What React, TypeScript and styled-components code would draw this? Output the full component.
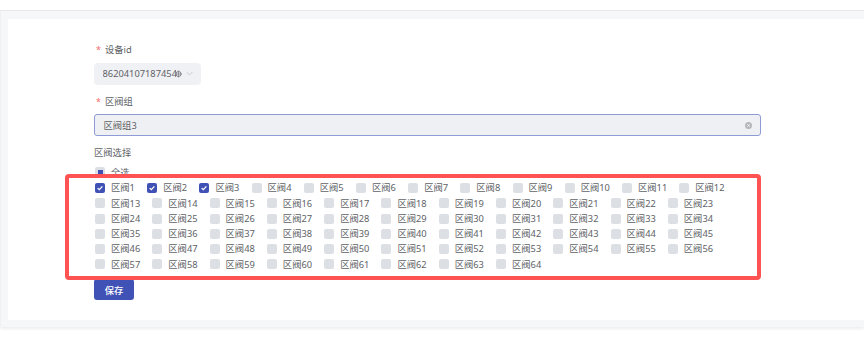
import React from 'react';
import styled, { createGlobalStyle } from 'styled-components';

const GlobalStyle = createGlobalStyle`
  html, body {
    margin: 0;
    padding: 0;
    background: #ffffff;
  }
  body {
    font-family: "Noto Sans", "Noto Sans CJK SC", sans-serif;
    color: #606266;
    font-size: 9.3px;
  }
`;

const Page = styled.div`
  width: 864px;
  height: 354px;
  padding-top: 10px;
  box-sizing: border-box;
  overflow: hidden;
`;

const Card = styled.div`
  border-top: 1px solid #e7e8eb;
  border-left: 1px solid #eef0f2;
  background: #f6f7f9;
  padding: 8px 0 7px 7px;
  box-shadow: 0 2px 3px rgba(0, 0, 0, 0.07);
`;

const Panel = styled.div`
  background: #ffffff;
  height: 301px;
  box-sizing: border-box;
  padding: 24px 0 0 86px;
`;

const Form = styled.div`
  width: 667px;
  display: flex;
  flex-direction: column;
`;

const Label = styled.div<{ $gap?: number }>`
  height: 14px;
  line-height: 14px;
  margin-top: ${(p) => p.$gap ?? 0}px;
  display: flex;
  align-items: center;
`;

const Required = styled.span`
  color: #f56c6c;
  margin: 0 4px 0 2px;
  font-size: 9px;
`;

const Select = styled.div`
  margin-top: 5.7px;
  width: 107px;
  height: 22px;
  background: #f0f1f4;
  border-radius: 4px;
  display: flex;
  align-items: center;
  padding-left: 8.5px;
  box-sizing: border-box;
  position: relative;
  overflow: hidden;
`;

const SelectText = styled.span`
  color: #606266;
  white-space: nowrap;
  width: 73px;
  overflow: hidden;
`;

const SelectIcons = styled.span`
  display: flex;
  align-items: center;
  gap: 4px;
  margin-left: -1px;
`;

const Input = styled.div`
  margin-top: 5.5px;
  height: 22px;
  background: #eff0f3;
  border: 1px solid #8f9bd6;
  border-radius: 3px;
  box-sizing: border-box;
  display: flex;
  align-items: center;
  justify-content: space-between;
  padding: 0 8px 0 8.5px;
`;

const AllRow = styled.div`
  margin-top: 4.5px;
  height: 15.3px;
`;

const Group = styled.div`
  position: relative;
  display: flex;
  flex-wrap: wrap;
  column-gap: 11.7px;
  margin-top: 0.3px;
`;

const Highlight = styled.div`
  position: absolute;
  top: -6.5px;
  left: -29px;
  right: 0;
  bottom: -8px;
  border: 4.5px solid #ff5252;
  border-radius: 4px;
  pointer-events: none;
`;

const Item = styled.label<{ $wide?: boolean }>`
  display: inline-flex;
  align-items: center;
  width: ${(p) => (p.$wide ? 45.6 : 40.5)}px;
  height: 15.3px;
  line-height: 15.3px;
`;

const Box = styled.span<{ $checked?: boolean }>`
  flex: none;
  width: 10px;
  height: 10px;
  border-radius: 2px;
  background: ${(p) => (p.$checked ? '#3f51b5' : '#dcdfe4')};
  display: inline-flex;
  align-items: center;
  justify-content: center;
  margin-left: 1px;
`;

const Partial = styled.span`
  width: 5px;
  height: 5px;
  background: #3f51b5;
`;

const ItemText = styled.span`
  margin-left: 6px;
  color: #606266;
  line-height: 15.3px;
  white-space: nowrap;
`;

const SaveButton = styled.button`
  margin-top: 7px;
  width: 40px;
  height: 21px;
  border: none;
  border-radius: 3px;
  background: #4052b5;
  color: #ffffff;
  font-family: "Noto Sans CJK SC", "Noto Sans", sans-serif;
  font-size: 9.3px;
  font-weight: 500;
  padding: 0;
  display: block;
`;

const Check = () => (
  <svg width="8" height="8" viewBox="0 0 8 8">
    <polyline points="1.6,4.1 3.3,5.7 6.4,2.4" fill="none" stroke="#fff" strokeWidth="1.3" />
  </svg>
);

const ClearIcon = ({ size = 7 }: { size?: number }) => (
  <svg width={size} height={size} viewBox="0 0 10 10">
    <circle cx="5" cy="5" r="5" fill="#b6b7ba" />
    <path d="M3.3 3.3 L6.7 6.7 M6.7 3.3 L3.3 6.7" stroke="#fff" strokeWidth="1.2" />
  </svg>
);

const CircleIcon = () => (
  <svg width="7" height="8" viewBox="0 0 10 10">
    <circle cx="5" cy="5" r="3.6" fill="none" stroke="#7b7e85" strokeWidth="1.4" />
    <path d="M0 5 H10 M5 0 V10" stroke="#7b7e85" strokeWidth="1.1" />
  </svg>
);

const Chevron = () => (
  <svg width="7" height="5" viewBox="0 0 10 6">
    <polyline points="1,1 5,5 9,1" fill="none" stroke="#b4b6bb" strokeWidth="1" />
  </svg>
);

const valves = Array.from({ length: 64 }, (_, i) => i + 1);
const checked = [1, 2, 3];

const App = (): JSX.Element => (
  <>
    <GlobalStyle />
    <Page>
      <Card>
        <Panel>
          <Form>
            <Label>
              <Required>*</Required>设备id
            </Label>
            <Select>
              <SelectText>86204107187454</SelectText>
              <SelectIcons>
                <CircleIcon />
                <Chevron />
              </SelectIcons>
            </Select>
            <Label $gap={10}>
              <Required>*</Required>区阀组
            </Label>
            <Input>
              <span>区阀组3</span>
              <ClearIcon />
            </Input>
            <Label $gap={10}>区阀选择</Label>
            <AllRow>
              <Item>
                <Box>
                  <Partial />
                </Box>
                <ItemText>全选</ItemText>
              </Item>
            </AllRow>
            <Group>
              <Highlight />
              {valves.map((n) => (
                <Item key={n} $wide={n >= 10}>
                  <Box $checked={checked.includes(n)}>{checked.includes(n) && <Check />}</Box>
                  <ItemText>区阀{n}</ItemText>
                </Item>
              ))}
            </Group>
            <SaveButton>保存</SaveButton>
          </Form>
        </Panel>
      </Card>
    </Page>
  </>
);

export default App;
